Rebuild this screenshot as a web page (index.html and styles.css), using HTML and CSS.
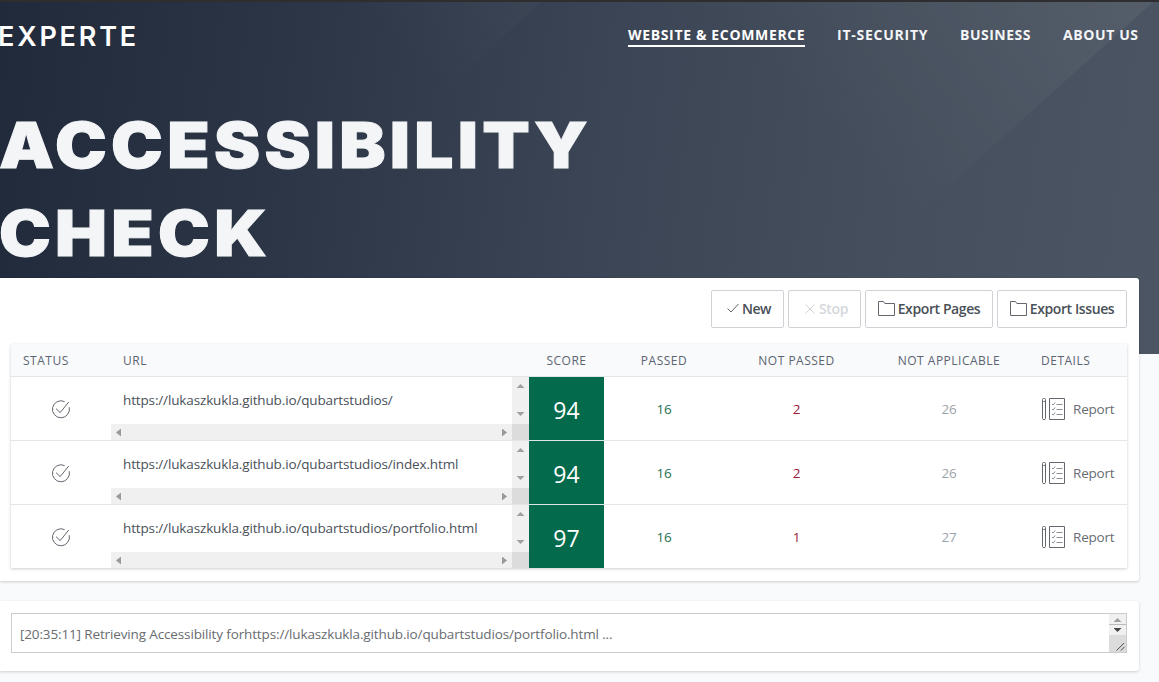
FILE: index.html
```html
<!DOCTYPE html>
<html lang="en">
<head>
<meta charset="utf-8">
<title>Accessibility Check</title>
<link rel="stylesheet" href="styles.css">
</head>
<body>
<svg class="sprite" width="0" height="0">
  <symbol id="done" viewBox="0 0 20 20"><path d="M13.6 2.6A8.5 8.5 0 1 0 18.2 8.2M5 9.6l4.2 4L17.7 3"/></symbol>
  <symbol id="folder" viewBox="0 0 17 15"><path d="M.5 14.500V.500h5l1.300 2h9.700v12z"/></symbol>
  <symbol id="report" viewBox="0 0 24 24"><path d="M1.500 4.500h2M.5 2.500q0-1 1-1h1q1 0 1 1v19l-.5 1h-2l-.5-1zM7.500 1.500h15v21h-15z"/><path class="faint" d="M10 7l1.200 1 2-2.500M10 12l1.200 1 2-2.500M10 17l1.200 1 2-2.500M14.500 7.500h6M14.500 12.500h6M14.500 17.500h6"/></symbol>
</svg>
<header class="hero">
  <svg class="hero-art" viewBox="0 0 1159 352" preserveAspectRatio="none">
    <defs>
      <linearGradient id="fade" gradientUnits="userSpaceOnUse" x1="1140" y1="0" x2="910" y2="220">
        <stop offset="0" stop-color="#fff" stop-opacity=".055"/><stop offset="1" stop-color="#fff" stop-opacity="0"/>
      </linearGradient>
      <linearGradient id="fade2" gradientUnits="userSpaceOnUse" x1="540" y1="0" x2="440" y2="95">
        <stop offset="0" stop-color="#fff" stop-opacity=".022"/><stop offset="1" stop-color="#fff" stop-opacity="0"/>
      </linearGradient>
    </defs>
    <path fill="url(#fade)" d="M600 0H1153L905 223H600z"/>
    <path fill="url(#fade2)" d="M300 0H540L440 95H300z"/>
  </svg>
  <div class="topbar">
    <a class="brand">EXPERTE</a>
    <nav class="nav">
      <a class="nav-link active n1">WEBSITE &amp; ECOMMERCE</a>
      <a class="nav-link n2">IT-SECURITY</a>
      <a class="nav-link n3">BUSINESS</a>
      <a class="nav-link n4">ABOUT US</a>
    </nav>
  </div>
  <h1 class="title">ACCESSIBILITY<br>CHECK</h1>
</header>
<main>
  <section class="card results">
    <div class="actions">
      <button class="btn small"><svg class="i-sm" viewBox="0 0 12 12"><path d="M.5 5.500l3.500 3.500L11.500 1"/></svg><span>New</span></button>
      <button class="btn small off"><svg class="i-sm" viewBox="0 0 12 12"><path d="M1.500 1.500l9 9M10.500 1.500l-9 9"/></svg><span>Stop</span></button>
      <button class="btn pages"><svg class="i-folder"><use href="#folder"/></svg><span>Export Pages</span></button>
      <button class="btn issues"><svg class="i-folder"><use href="#folder"/></svg><span>Export Issues</span></button>
    </div>
    <div class="table">
      <div class="row head"><span class="left">STATUS</span><span class="left">URL</span><span>SCORE</span><span>PASSED</span><span>NOT PASSED</span><span>NOT APPLICABLE</span><span class="left">DETAILS</span></div>
      <div class="row">
        <div class="status"><svg class="i-done"><use href="#done"/></svg></div>
        <div class="url"><div class="url-text">https://lukaszkukla.github.io/qubartstudios/</div><div class="vbar"><i class="up"></i><i class="down"></i></div><div class="hbar"><i class="lt"></i><i class="rt"></i></div><div class="corner"></div></div>
        <div class="score">94</div><div class="num pass">16</div><div class="num fail">2</div><div class="num na">26</div>
        <div class="details"><svg class="i-report"><use href="#report"/></svg><span>Report</span></div>
      </div>
      <div class="row">
        <div class="status"><svg class="i-done"><use href="#done"/></svg></div>
        <div class="url"><div class="url-text">https://lukaszkukla.github.io/qubartstudios/index.html</div><div class="vbar"><i class="up"></i><i class="down"></i></div><div class="hbar"><i class="lt"></i><i class="rt"></i></div><div class="corner"></div></div>
        <div class="score">94</div><div class="num pass">16</div><div class="num fail">2</div><div class="num na">26</div>
        <div class="details"><svg class="i-report"><use href="#report"/></svg><span>Report</span></div>
      </div>
      <div class="row">
        <div class="status"><svg class="i-done"><use href="#done"/></svg></div>
        <div class="url"><div class="url-text">https://lukaszkukla.github.io/qubartstudios/portfolio.html</div><div class="vbar"><i class="up"></i><i class="down"></i></div><div class="hbar"><i class="lt"></i><i class="rt"></i></div><div class="corner"></div></div>
        <div class="score">97</div><div class="num pass">16</div><div class="num fail">1</div><div class="num na">27</div>
        <div class="details"><svg class="i-report"><use href="#report"/></svg><span>Report</span></div>
      </div>
    </div>
  </section>
  <section class="card log">
    <div class="console">
      <span class="message">[20:35:11] Retrieving Accessibility forhttps://lukaszkukla.github.io/qubartstudios/portfolio.html ...</span>
      <div class="console-bar"><div class="spin"><i class="up"></i><i class="down dark"></i></div><svg class="grip" viewBox="0 0 18 18"><path d="M8 16.500l8-8M12.500 16.500l4-4"/></svg></div>
    </div>
  </section>
</main>
</body>
</html>
```
FILE: styles.css
```css
* { box-sizing: border-box; }
body { margin: 0; height: 682px; overflow: hidden; background: #f8fafc; font-family: "Open Sans", "Noto Sans", sans-serif; font-size: 14px; color: #4a5058; }
.sprite { position: absolute; }
svg { fill: none; stroke: #63676e; stroke-width: 1; flex: none; }
.hero { position: relative; height: 354px; border-top: 2px solid #2e2e2f; background: linear-gradient(97deg, #212a3a 0%, #2b3546 24%, #3c4555 52%, #454e5c 75%, #4c5563 100%); }
.hero-art { position: absolute; inset: 0; width: 100%; height: 100%; stroke: none; }
.topbar { position: relative; display: flex; justify-content: space-between; height: 66px; padding: 20px 20px 0 0; color: #fff; }
.brand { margin-left: -2px; font: 600 27px/29px Inter, sans-serif; letter-spacing: 2.8px; }
.nav { display: flex; gap: 32px; }
.nav-link { height: 25px; padding-top: 3px; font-weight: 700; font-size: 14px; line-height: 20px; white-space: nowrap; color: #f3f5f7; letter-spacing: .6px; }
.active { border-bottom: 2px solid #fff; color: #fff; }
.n1 { width: 177px; letter-spacing: .65px; }
.n2 { width: 91px; letter-spacing: .75px; }
.n3 { width: 71px; letter-spacing: .5px; }
.n4 { width: 76px; }
.title { position: relative; width: 900px; margin: 33px 0 0 -1px; font: 900 63px/88px Inter, sans-serif; color: #f3f5f7; letter-spacing: 3.9px; -webkit-text-stroke: 1px #f3f5f7; transform: scaleX(1.1); transform-origin: 0 0; }
.card { width: 1139px; background: #fff; box-shadow: 0 1px 3px rgba(0,0,0,.18); }
.results { position: relative; height: 303px; margin-top: -76px; padding: 12px 12px 0 11px; border-radius: 0 3px 3px 0; }
.actions { display: flex; justify-content: flex-end; gap: 4px; }
.btn { display: flex; align-items: center; justify-content: center; gap: 4px; height: 38px; padding: 0; border: 1px solid #cfd3d7; border-radius: 2px; background: #fff; font: 600 14px/20px "Open Sans", sans-serif; letter-spacing: -.4px; color: #495057; white-space: nowrap; }
.small { width: 73px; gap: 3px; padding-left: 3px; }
.pages { width: 128px; gap: 3px; }
.issues { width: 130px; gap: 3px; }
.off { color: #d5d8dc; }
.off svg { stroke: #cfd3d7; }
.i-sm { width: 12px; height: 12px; }
.i-folder { width: 17px; height: 15px; margin-top: -1px; }
.table { margin-top: 16px; width: 1116px; box-shadow: 0 1px 3px rgba(0,0,0,.2); }
.row { display: grid; grid-template-columns: 100px 418px 75px 120px 145px 160px 98px; height: 64px; border-bottom: 1px solid #e2e5e9; }
.row:last-child { height: 63px; border-bottom: 0; }
.head { height: 33px; align-items: center; background: #f8fafc; text-align: center; font-size: 12px; font-weight: 500; letter-spacing: .5px; color: #5c6470; }
.head .left { text-align: left; padding-left: 12px; }
.status { display: flex; align-items: center; justify-content: center; }
.i-done { width: 20px; height: 20px; }
.url { display: grid; grid-template-columns: 401px 17px; grid-template-rows: 47px 1fr; overflow: hidden; }
.url-text { padding-left: 12px; line-height: 46px; font-size: 13.500px; letter-spacing: -.14px; white-space: nowrap; }
.vbar, .hbar { display: flex; justify-content: space-between; align-items: center; background: #f0f0f0; }
.vbar { flex-direction: column; padding: 7px 0 8px; }
.hbar { padding: 1px 5px 0 5px; }
.corner { background: #dcdcdc; }
.up, .down { width: 8px; height: 4px; background: #a0a0a0; }
.up { clip-path: polygon(50% 0, 100% 100%, 0 100%); }
.down { clip-path: polygon(0 0, 100% 0, 50% 100%); }
.lt, .rt { width: 5px; height: 8px; background: #999; }
.lt { clip-path: polygon(0 50%, 100% 0, 100% 100%); }
.rt { clip-path: polygon(0 0, 100% 50%, 0 100%); }
.dark { background: #444; }
.score { display: flex; align-items: center; justify-content: center; padding-top: 3px; background: #036b4c; color: #fff; font-size: 23px; }
.num { display: flex; align-items: center; justify-content: center; font-size: 13.500px; letter-spacing: -.1px; }
.pass { color: #24714f; }
.fail { color: #9e1838; }
.na { color: #9ba1aa; }
.details { display: flex; align-items: center; gap: 7px; padding-left: 13px; color: #686c72; font-size: 13.500px; letter-spacing: -.2px; }
.i-report { width: 24px; height: 24px; }
.faint { stroke: #8b8e94; }
.log { height: 70px; margin-top: 20px; padding: 12px 12px 0 11px; border-radius: 0 3px 3px 0; }
.console { display: flex; justify-content: space-between; height: 40px; border: 1px solid #c9cdd1; color: #686c70; }
.message { padding-left: 8px; line-height: 41px; font-size: 13.500px; letter-spacing: -.135px; white-space: nowrap; }
.console-bar { width: 17px; background: #dcdcdc; }
.spin { display: flex; flex-direction: column; align-items: center; justify-content: space-between; height: 21px; padding: 4px 0 3px; background: linear-gradient(#f0f0f0 10px, #bbb 10px, #bbb 11px, #f0f0f0 11px); }
.grip { display: block; width: 17px; height: 17px; stroke: #444; }
```
